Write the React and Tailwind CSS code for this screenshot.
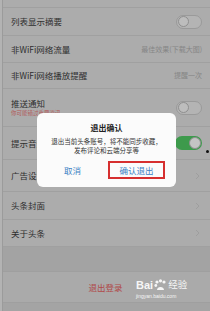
import React from "react";

const Chevron = () => (
  <svg width="5" height="8" viewBox="0 0 5 8" className="mr-[2px]">
    <polyline points="1,1 4,4 1,7" fill="none" stroke="#9c9c9c" strokeWidth="0.9" />
  </svg>
);

const ToggleOff = () => (
  <div className="w-[26px] h-[14px] rounded-full border border-[#9a9a9a] bg-[#b4b4b4] flex items-center px-[1px]">
    <div className="w-[11px] h-[11px] rounded-full bg-[#bdbdbd] border border-[#8f8f8f]" />
  </div>
);

const ToggleOn = () => (
  <div className="w-[27px] h-[14px] rounded-full bg-[#3d9a4c] flex items-center justify-end px-[1px]">
    <div className="w-[12px] h-[12px] rounded-full bg-[#c4c4c4] border border-[#8f8f8f]" />
  </div>
);

function Row({ h, label, right, children }) {
  return (
    <div
      className="flex items-center justify-between pl-[8px] pr-[8px] border-b border-[#a0a0a0] bg-[#acacac]"
      style={{ height: h }}
    >
      <div className="flex flex-col">
        <span className="text-[8.5px] leading-none text-[#2e2e2e]">{label}</span>
        {children}
      </div>
      {right}
    </div>
  );
}

export default function App() {
  return (
    <div className="relative w-[210px] h-[311px] overflow-hidden bg-[#a4a4a4] font-['Noto_Sans_CJK_SC','Noto_Sans',sans-serif]">
      <div className="flex h-full">
        <div className="w-[3px] h-full bg-[#b3b3b3] border-r border-[#9b9b9b]" />
        <div className="flex-1 flex flex-col">
          <div className="h-[8px] bg-[#acacac] border-b border-[#a0a0a0]" />
          <Row h="28px" label="列表显示摘要" right={<ToggleOff />} />
          <Row
            h="27px"
            label="非WiFi网络流量"
            right={<span className="text-[7px] leading-none text-[#868686]">最佳效果(下载大图)</span>}
          />
          <Row
            h="26px"
            label="非WiFi网络播放提醒"
            right={<span className="text-[7px] leading-none text-[#868686]">提醒一次</span>}
          />
          <Row h="38px" label="推送通知" right={<ToggleOff />}>
            <span className="mt-[4px] text-[5.5px] leading-none text-[#b25a5a]">你可能错过重要资讯</span>
          </Row>
          <Row h="33px" label="提示音开关" right={<ToggleOn />} />
          <Row h="32px" label="广告设置" right={<Chevron />} />
          <Row h="28px" label="头条封面" right={<Chevron />} />
          <Row h="27px" label="关于头条" right={<Chevron />} />
          <div className="h-[25px] bg-[#a3a3a3] border-b border-[#9f9f9f]" />
          <div className="h-[31px] bg-[#aaaaaa] border-b border-[#9f9f9f] flex items-center justify-center">
            <span className="text-[8.5px] leading-none text-[#b04848] mr-[2px]">退出登录</span>
          </div>
        </div>
      </div>

      {/* Dialog */}
      <div className="absolute left-[37px] top-[113px] w-[139px] h-[74px] bg-[#fbfbfb] rounded-[6px] flex flex-col items-center">
        <div className="mt-[11px] text-[8px] leading-none font-bold text-[#222]">退出确认</div>
        <div className="mt-[5px] text-[6.5px] leading-[9px] text-[#333] text-center whitespace-nowrap">
          退出当前头条账号，将不能同步收藏，
          <br />
          发布评论和云端分享等
        </div>
        <div className="mt-[6px] w-full flex items-center">
          <div className="w-[71px] flex justify-center">
            <span className="text-[8.5px] leading-none text-[#3b82c4]">取消</span>
          </div>
          <div className="w-[57px] h-[18px] border-2 border-[#d62f2f] flex items-center justify-center">
            <span className="text-[8.5px] leading-none text-[#3b82c4]">确认退出</span>
          </div>
        </div>
      </div>

      {/* stray dot */}
      <div className="absolute left-[206px] top-[150px] w-[3px] h-[3px] rounded-full bg-[#111]" />

      {/* watermark */}
      <div className="absolute left-[136px] top-[279px] flex flex-col items-start opacity-90">
        <div className="flex items-center">
          <span className="text-[11px] leading-none font-bold text-white font-['Liberation_Sans',sans-serif]">Bai</span>
          <svg width="13" height="12" viewBox="0 0 13 12" className="mx-[1px]">
            <circle cx="3" cy="3" r="1.6" fill="#fff" />
            <circle cx="6.5" cy="1.8" r="1.6" fill="#fff" />
            <circle cx="10" cy="3" r="1.6" fill="#fff" />
            <circle cx="1.8" cy="6.5" r="1.4" fill="#fff" />
            <path d="M3 11 C3 7 10 7 10 11 Z" fill="#fff" />
          </svg>
          <span className="text-[9.5px] leading-none text-white">经验</span>
        </div>
        <span className="mt-[3px] text-[5px] leading-none text-white font-['Liberation_Sans',sans-serif]">
          jingyan.baidu.com
        </span>
      </div>
    </div>
  );
}
